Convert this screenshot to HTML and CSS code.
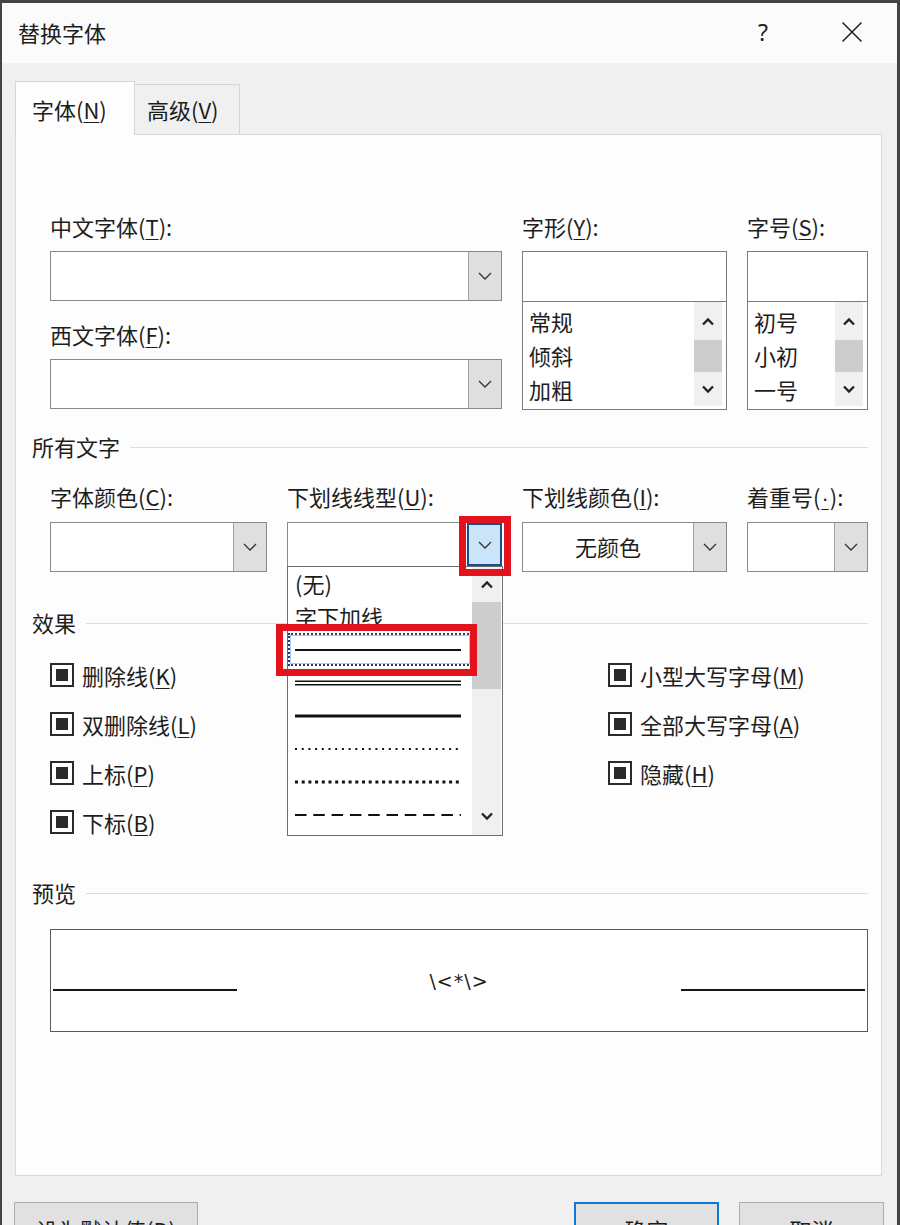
FILE: index.html
```html
<!DOCTYPE html>
<html lang="zh-CN">

<head>
  <meta charset="UTF-8">
  <meta name="viewport" content="width=device-width, initial-scale=1.0">
  <title>替换字体</title>
  <link rel="stylesheet" href="styles.css">
</head>

<body>
  <div class="dialog">
    <!-- Title bar -->
    <div class="titlebar">
      <span class="title">替换字体</span>
      <span class="help">?</span>
      <span class="close">
        <svg width="22" height="22" viewBox="0 0 22 22"><path d="M1.5 1.5l19 19M20.5 1.5l-19 19" stroke="#1e1e1e" stroke-width="1.5" fill="none"/></svg>
      </span>
    </div>

    <!-- Tabs -->
    <div class="tabs">
      <div class="tab active">字体(<u>N</u>)</div>
      <div class="tab">高级(<u>V</u>)</div>
    </div>

    <!-- Tab panel -->
    <div class="panel">
      <div class="font-grid">
        <div class="font-main">
          <div class="lbl">中文字体(<u>T</u>):</div>
          <div class="combo">
            <div class="field"></div>
            <div class="drop"><svg width="14" height="8" viewBox="0 0 14 8"><path d="M1 1l6 6 6-6" fill="none" stroke="#333" stroke-width="1.3"/></svg></div>
          </div>
          <div class="lbl second">西文字体(<u>F</u>):</div>
          <div class="combo">
            <div class="field"></div>
            <div class="drop"><svg width="14" height="8" viewBox="0 0 14 8"><path d="M1 1l6 6 6-6" fill="none" stroke="#333" stroke-width="1.3"/></svg></div>
          </div>
        </div>

        <div class="pick">
          <div class="lbl">字形(<u>Y</u>):</div>
          <div class="pick-box">
            <div class="pick-input"></div>
            <div class="pick-list">
              <ul class="items">
                <li>常规</li>
                <li>倾斜</li>
                <li>加粗</li>
              </ul>
              <div class="vscroll">
                <div class="arrow up"><svg width="14" height="9" viewBox="0 0 14 9"><path d="M2 7.5l5-5 5 5" fill="none" stroke="#222" stroke-width="2.3"/></svg></div>
                <div class="thumb"></div>
                <div class="arrow down"><svg width="14" height="9" viewBox="0 0 14 9"><path d="M2 1.5l5 5 5-5" fill="none" stroke="#222" stroke-width="2.3"/></svg></div>
              </div>
            </div>
          </div>
        </div>

        <div class="pick">
          <div class="lbl">字号(<u>S</u>):</div>
          <div class="pick-box">
            <div class="pick-input"></div>
            <div class="pick-list">
              <ul class="items">
                <li>初号</li>
                <li>小初</li>
                <li>一号</li>
              </ul>
              <div class="vscroll">
                <div class="arrow up"><svg width="14" height="9" viewBox="0 0 14 9"><path d="M2 7.5l5-5 5 5" fill="none" stroke="#222" stroke-width="2.3"/></svg></div>
                <div class="thumb"></div>
                <div class="arrow down"><svg width="14" height="9" viewBox="0 0 14 9"><path d="M2 1.5l5 5 5-5" fill="none" stroke="#222" stroke-width="2.3"/></svg></div>
              </div>
            </div>
          </div>
        </div>
      </div>

      <!-- All text section -->
      <div class="section-head all-head"><span>所有文字</span></div>
      <div class="all-grid">
        <div>
          <div class="lbl">字体颜色(<u>C</u>):</div>
          <div class="combo">
            <div class="field"></div>
            <div class="drop"><svg width="14" height="8" viewBox="0 0 14 8"><path d="M1 1l6 6 6-6" fill="none" stroke="#333" stroke-width="1.3"/></svg></div>
          </div>
        </div>
        <div>
          <div class="lbl">下划线线型(<u>U</u>):</div>
          <div class="combo open">
            <div class="field"></div>
            <div class="drop pressed"><svg width="14" height="8" viewBox="0 0 14 8"><path d="M1 1l6 6 6-6" fill="none" stroke="#333" stroke-width="1.3"/></svg></div>
            <div class="mark mark-btn"></div>

            <!-- Open dropdown list -->
            <div class="dropdown">
              <ul class="line-items">
                <li>(无)</li>
                <li>字下加线</li>
                <li class="focused"><svg width="166" height="8"><line x1="0" y1="4" x2="166" y2="4" stroke="#111" stroke-width="2"/></svg></li>
                <li><svg width="166" height="8"><line x1="0" y1="2.2" x2="166" y2="2.2" stroke="#111" stroke-width="1.6"/><line x1="0" y1="5.8" x2="166" y2="5.8" stroke="#111" stroke-width="1.6"/></svg></li>
                <li><svg width="166" height="8"><line x1="0" y1="4" x2="166" y2="4" stroke="#111" stroke-width="3"/></svg></li>
                <li><svg width="166" height="8"><line x1="0" y1="4" x2="166" y2="4" stroke="#111" stroke-width="1.8" stroke-dasharray="2 4.7"/></svg></li>
                <li><svg width="166" height="8"><line x1="0" y1="4" x2="166" y2="4" stroke="#111" stroke-width="3" stroke-dasharray="3 3.7"/></svg></li>
                <li><svg width="166" height="8"><line x1="0" y1="4" x2="166" y2="4" stroke="#111" stroke-width="2" stroke-dasharray="11.5 6.8"/></svg></li>
              </ul>
              <div class="vscroll dd-scroll">
                <div class="arrow up"><svg width="14" height="9" viewBox="0 0 14 9"><path d="M2 7.5l5-5 5 5" fill="none" stroke="#222" stroke-width="2.3"/></svg></div>
                <div class="thumb"></div>
                <div class="spacer"></div>
                <div class="arrow down"><svg width="14" height="9" viewBox="0 0 14 9"><path d="M2 1.5l5 5 5-5" fill="none" stroke="#222" stroke-width="2.3"/></svg></div>
              </div>
              <div class="mark mark-item"></div>
            </div>
          </div>
        </div>
        <div>
          <div class="lbl">下划线颜色(<u>I</u>):</div>
          <div class="combo">
            <div class="field centered">无颜色</div>
            <div class="drop"><svg width="14" height="8" viewBox="0 0 14 8"><path d="M1 1l6 6 6-6" fill="none" stroke="#333" stroke-width="1.3"/></svg></div>
          </div>
        </div>
        <div>
          <div class="lbl">着重号(<u class="dot">·</u>):</div>
          <div class="combo">
            <div class="field"></div>
            <div class="drop"><svg width="14" height="8" viewBox="0 0 14 8"><path d="M1 1l6 6 6-6" fill="none" stroke="#333" stroke-width="1.3"/></svg></div>
          </div>
        </div>
      </div>

      <!-- Effects section -->
      <div class="section-head fx-head"><span>效果</span></div>
      <div class="effects">
        <div class="fx-col left">
          <div class="check"><span class="box"><i></i></span>删除线(<u>K</u>)</div>
          <div class="check"><span class="box"><i></i></span>双删除线(<u>L</u>)</div>
          <div class="check"><span class="box"><i></i></span>上标(<u>P</u>)</div>
          <div class="check"><span class="box"><i></i></span>下标(<u>B</u>)</div>
        </div>
        <div class="fx-col">
          <div class="check"><span class="box"><i></i></span>小型大写字母(<u>M</u>)</div>
          <div class="check"><span class="box"><i></i></span>全部大写字母(<u>A</u>)</div>
          <div class="check"><span class="box"><i></i></span>隐藏(<u>H</u>)</div>
        </div>
      </div>

      <!-- Preview section -->
      <div class="section-head pv-head"><span>预览</span></div>
      <div class="preview">
        <div class="pv-line"></div>
        <div class="pv-text">\&lt;*\&gt;</div>
        <div class="pv-line"></div>
      </div>
    </div>

    <!-- Bottom buttons -->
    <div class="buttons">
      <div class="btn wide">设为默认值(<u>D</u>)</div>
      <div class="btn-group">
        <div class="btn primary">确定</div>
        <div class="btn">取消</div>
      </div>
    </div>
  </div>
</body>

</html>
```

FILE: styles.css
```css
/* Base */
* {
  box-sizing: border-box;
}

html,
body {
  margin: 0;
  height: 100%;
}

body {
  overflow: hidden;
  background: #f0f0f0;
  font-family: "Noto Sans CJK SC", "Noto Sans", sans-serif;
  font-size: 22px;
  color: #1d1d1d;
}

u {
  text-decoration-thickness: 1px;
  text-underline-offset: 3px;
}

u.dot {
  font-family: "Liberation Sans", sans-serif;
  padding: 0 1px;
}

ul {
  list-style: none;
  margin: 0;
  padding: 0;
}

/* Dialog frame */
.dialog {
  width: 900px;
  height: 1225px;
  border: 3px solid #444;
  border-left-width: 2px;
  border-bottom: none;
  background: #f0f0f0;
}

/* Title bar */
.titlebar {
  height: 60px;
  display: flex;
  align-items: center;
  padding: 0 0 3px 16px;
  background: #fbfbfb;
}

.title {
  flex: 1;
  line-height: 24px;
}

.help {
  width: 30px;
  text-align: center;
  font-family: "Noto Sans", sans-serif;
  font-size: 23px;
  margin-right: 54px;
}

.close {
  width: 40px;
  height: 24px;
  display: flex;
  align-items: center;
  justify-content: center;
  margin-right: 25px;
}

/* Tabs */
.tabs {
  height: 71px;
  display: flex;
  align-items: flex-end;
  padding-left: 13px;
}

.tab {
  height: 50px;
  width: 105px;
  padding: 12px 0 0 12px;
  line-height: 24px;
  border: 1px solid #d6d6d6;
  border-left: none;
  border-bottom: none;
}

.tab.active {
  position: relative;
  z-index: 1;
  height: 54px;
  width: 120px;
  margin-bottom: -1px;
  padding: 15px 0 0 16px;
  border-left: 1px solid #d6d6d6;
  background: #fdfdfd;
}

/* Tab panel */
.panel {
  width: 867px;
  height: 1042px;
  margin-left: 13px;
  padding: 80px 13px 0 16px;
  border: 1px solid #d9d9d9;
  background: #fdfdfd;
}

.lbl {
  height: 24px;
  line-height: 22px;
  margin-bottom: 12px;
  white-space: nowrap;
}

.lbl.second {
  margin-top: 22px;
}

/* Combo boxes */
.combo {
  position: relative;
  height: 50px;
  display: flex;
  border: 1px solid #8a8a8a;
  background: #fff;
}

.combo .field {
  flex: 1;
  line-height: 46px;
}

.combo .field.centered {
  text-align: center;
}

.combo .drop {
  width: 33px;
  display: flex;
  align-items: center;
  justify-content: center;
  border-left: 1px solid #a3a3a3;
  background: #dfdfdf;
}

.combo .drop.pressed {
  width: 35px;
  margin: 0 -1px 5px 0;
  border: 2px solid #1b4f8c;
  background: #cce4f7;
}

/* Top font grid */
.font-grid,
.all-grid {
  display: grid;
  grid-template-columns: 217px 215px 205px 121px;
  column-gap: 20px;
  margin-left: 18px;
}

.font-main {
  grid-column: span 2;
}

.pick-box {
  border: 1px solid #7d7d7d;
  background: #fff;
}

.pick-input {
  height: 50px;
  border-bottom: 1px solid #7d7d7d;
}

.pick-list {
  height: 107px;
  display: flex;
}

.items {
  flex: 1;
  padding: 2px 0 0 6px;
}

.items li {
  height: 34px;
  line-height: 34px;
}

/* Scrollbars */
.vscroll {
  width: 28px;
  margin: 0 4px 3px 0;
  display: flex;
  flex-direction: column;
  background: #f0f0f0;
}

.vscroll .arrow {
  display: flex;
  align-items: center;
  justify-content: center;
}

.vscroll .arrow.up {
  height: 38px;
}

.vscroll .thumb {
  height: 32px;
  background: #cdcdcd;
}

.vscroll .arrow.down {
  flex: 1;
}

/* Section headers */
.section-head {
  height: 24px;
  line-height: 22px;
  display: flex;
  align-items: center;
}

.section-head::after {
  content: "";
  flex: 1;
  margin: 2px 0 0 10px;
  border-top: 1px solid #dcdcdc;
}

.all-head {
  margin-top: 24px;
}

.all-grid {
  margin-top: 27px;
}

.all-grid .lbl {
  margin-bottom: 13px;
}

.fx-head {
  margin-top: 38px;
}

.pv-head {
  margin-top: 34px;
}

/* Underline dropdown list */
.dropdown {
  position: absolute;
  z-index: 2;
  top: 43px;
  left: -1px;
  width: 216px;
  height: 270px;
  display: flex;
  border: 1px solid #6e6e6e;
  background: #fff;
}

.line-items {
  flex: 1;
}

.line-items li {
  height: 33px;
  line-height: 31px;
  padding-left: 7px;
  display: flex;
  align-items: center;
}

.line-items li.focused {
  border: 2px dotted #1f3b78;
  box-shadow: inset 0 0 0 1px #a8cbef;
  padding-left: 5px;
}

.dd-scroll {
  width: 29px;
  margin: 0 1px 0 0;
}

.dd-scroll .arrow.up {
  height: 35px;
}

.dd-scroll .thumb {
  height: 87px;
}

.dd-scroll .spacer {
  flex: 1;
}

.dd-scroll .arrow.down {
  flex: none;
  height: 34px;
  margin-bottom: 2px;
}

/* Red highlight frames */
.mark {
  position: absolute;
  z-index: 3;
  border: 7px solid #e2131c;
}

.mark-btn {
  left: 171px;
  top: -7px;
  width: 52px;
  height: 60px;
}

.mark-item {
  left: -12px;
  top: 57px;
  width: 201px;
  height: 52px;
}

/* Effects checkboxes */
.effects {
  display: flex;
  margin: 16px 0 0 18px;
}

.fx-col.left {
  width: 558px;
}

.check {
  height: 49px;
  display: flex;
  align-items: center;
  white-space: nowrap;
}

.check .box {
  width: 24px;
  height: 24px;
  margin-right: 8px;
  padding: 4px;
  border: 2px solid #2a2a2a;
  background: #fff;
}

.check .box i {
  display: block;
  width: 12px;
  height: 12px;
  background: #2a2a2a;
}

/* Preview box */
.preview {
  height: 103px;
  margin: 25px 0 0 18px;
  padding: 0 2px;
  display: flex;
  border: 1px solid #5a5a5a;
  background: #fff;
}

.pv-line {
  width: 184px;
  height: 2px;
  margin-top: 59px;
  background: #161616;
}

.pv-text {
  flex: 1;
  margin-top: 39px;
  line-height: 24px;
  text-align: center;
  font-family: "DejaVu Sans", sans-serif;
  font-size: 19px;
  letter-spacing: 1px;
}

/* Bottom buttons */
.buttons {
  display: flex;
  justify-content: space-between;
  margin-top: 26px;
  padding: 0 13px 0 12px;
}

.btn-group {
  display: flex;
  gap: 20px;
}

.btn {
  width: 145px;
  height: 54px;
  line-height: 52px;
  text-align: center;
  border: 1px solid #adadad;
  background: #e1e1e1;
}

.btn.wide {
  width: 184px;
}

.btn.primary {
  border: 2px solid #0a78d4;
  line-height: 50px;
}
```
